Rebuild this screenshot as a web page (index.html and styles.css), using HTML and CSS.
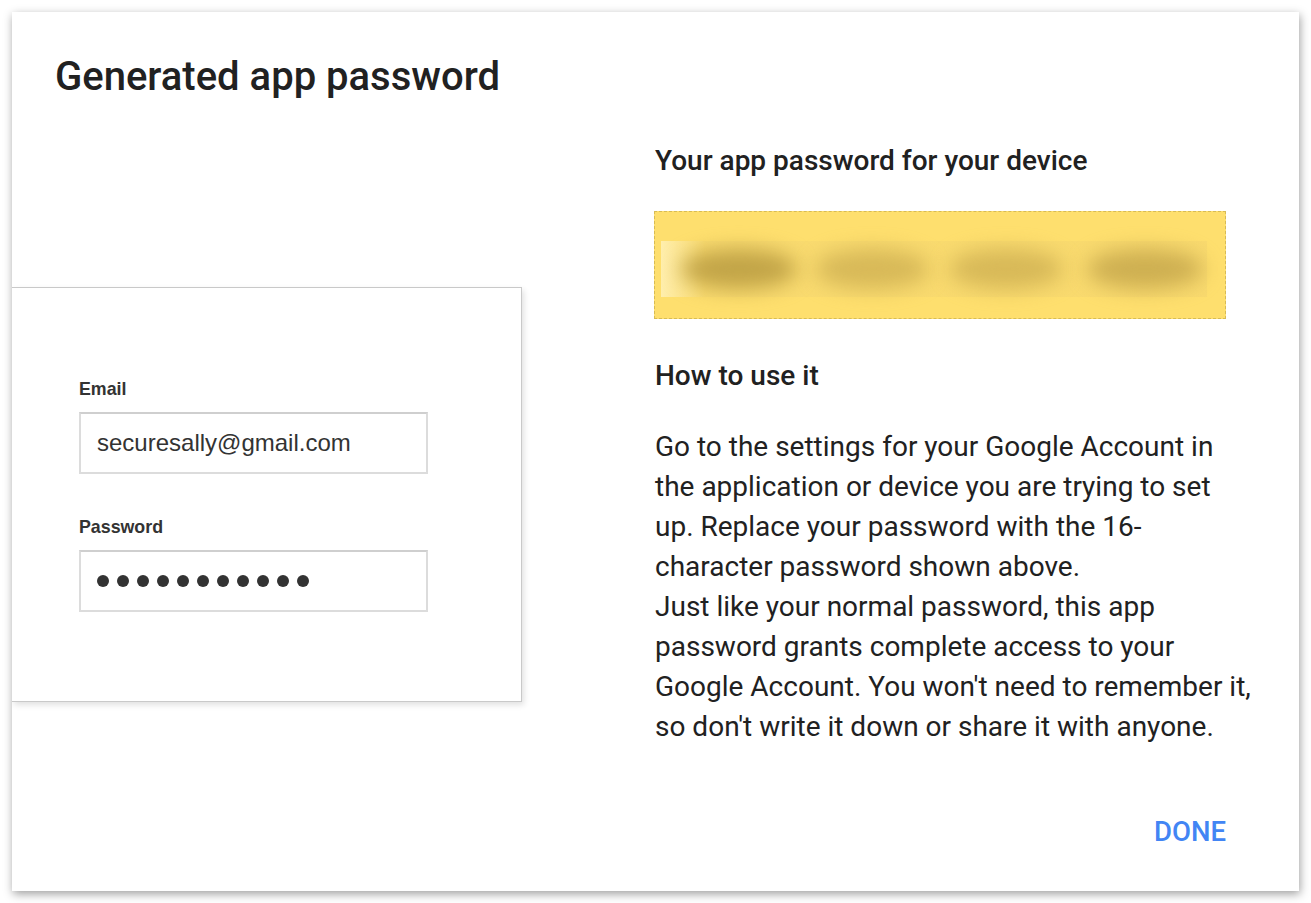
FILE: index.html
```html
<!DOCTYPE html>
<html lang="en">
<head>
<meta charset="utf-8">
<title>Generated app password</title>
<link rel="stylesheet" href="styles.css">
</head>
<body>
<div class="dialog">
  <h1 class="title">Generated app password</h1>
  <div class="body">
    <div class="left">
      <div class="card">
        <div class="field-label">Email</div>
        <div class="field-input">securesally@gmail.com</div>
        <div class="field-label second">Password</div>
        <div class="field-input dots">
          <span class="dot"></span><span class="dot"></span><span class="dot"></span><span class="dot"></span><span class="dot"></span><span class="dot"></span><span class="dot"></span><span class="dot"></span><span class="dot"></span><span class="dot"></span><span class="dot"></span>
        </div>
      </div>
    </div>
    <div class="right">
      <h2 class="heading">Your app password for your device</h2>
      <div class="pw-box">
        <div class="pw-strip">
          <span class="blob b1"></span><span class="blob b2"></span><span class="blob b3"></span><span class="blob b4"></span>
        </div>
      </div>
      <h2 class="heading how">How to use it</h2>
      <p class="para">
        <span class="line">Go to the settings for your Google Account in</span>
        <span class="line">the application or device you are trying to set</span>
        <span class="line">up. Replace your password with the 16-</span>
        <span class="line">character password shown above.</span>
        <span class="line">Just like your normal password, this app</span>
        <span class="line">password grants complete access to your</span>
        <span class="line">Google Account. You won't need to remember it,</span>
        <span class="line">so don't write it down or share it with anyone.</span>
      </p>
    </div>
  </div>
  <div class="footer">
    <button class="done">DONE</button>
  </div>
</div>
</body>
</html>
```
FILE: styles.css
```css
html, body {
  margin: 0;
  padding: 0;
  background: #ffffff;
}
body {
  padding: 12px;
  font-family: Roboto, "Noto Sans", Arial, sans-serif;
  color: #212121;
}
.dialog {
  box-sizing: border-box;
  width: 1287px;
  height: 879px;
  background: #ffffff;
  box-shadow: 1px 3px 9px rgba(0, 0, 0, 0.38);
  display: flex;
  flex-direction: column;
  overflow: hidden;
}
.title {
  margin: 0;
  padding: 41px 0 0 43px;
  font-size: 40px;
  line-height: 48px;
  font-weight: 500;
  color: #212121;
}
.body {
  display: flex;
}
.left {
  width: 510px;
  flex: none;
}
.card {
  box-sizing: border-box;
  margin-top: 186px;
  width: 510px;
  height: 415px;
  background: #fff;
  border: 1px solid #c9c9c9;
  border-left: none;
  box-shadow: 2px 3px 6px rgba(0, 0, 0, 0.12);
  padding: 91px 0 0 67px;
  font-family: "Liberation Sans", Arial, sans-serif;
}
.field-label {
  font-size: 17.8px;
  line-height: 20px;
  font-weight: bold;
  color: #333;
}
.field-label.second {
  margin-top: 43px;
}
.field-input {
  box-sizing: border-box;
  margin-top: 13px;
  width: 349px;
  height: 62px;
  border: 2px solid #dcdcdc;
  border-top-color: #cfcfcf;
  padding-left: 16px;
  display: flex;
  align-items: center;
  font-size: 24px;
  color: #333;
}
.dots {
  gap: 8px;
  padding-bottom: 1px;
}
.dot {
  width: 12px;
  height: 12px;
  border-radius: 50%;
  background: #333;
}
.right {
  margin-left: 132px;
  width: 620px;
}
.heading {
  margin: 44px 0 0 1px;
  font-size: 28px;
  line-height: 32px;
  font-weight: 500;
  color: #212121;
}
.heading.how {
  margin-top: 41px;
}
.pw-box {
  box-sizing: border-box;
  margin-top: 34px;
  width: 572px;
  height: 108px;
  background: #fedf6e;
  border: 1px dashed #d7bb55;
  padding: 29px 18px 0 6px;
}
.pw-strip {
  position: relative;
  height: 56px;
  background: linear-gradient(90deg, rgba(255, 240, 180, 0.9) 0%, rgba(247, 217, 112, 0.7) 8%, rgba(245, 214, 110, 0.6) 100%);
}
.blob {
  position: absolute;
  top: 8px;
  height: 40px;
  border-radius: 50%;
  filter: blur(10px);
}
.b1 { left: 20px; width: 116px; background: rgba(185, 155, 65, 0.85); }
.b2 { left: 154px; width: 114px; background: rgba(195, 165, 75, 0.62); }
.b3 { left: 288px; width: 114px; background: rgba(195, 165, 75, 0.62); }
.b4 { left: 426px; width: 116px; background: rgba(190, 160, 70, 0.72); }
.para {
  margin: 35px 0 0 1px;
  font-size: 28px;
  line-height: 40px;
  color: #212121;
}
.line {
  display: block;
  white-space: nowrap;
}
.footer {
  display: flex;
  justify-content: flex-end;
  padding-right: 73px;
  margin-top: 69px;
}
.done {
  border: none;
  background: none;
  padding: 0;
  font-family: Roboto, Arial, sans-serif;
  font-size: 27.5px;
  line-height: 32px;
  font-weight: 500;
  color: #4285f4;
  cursor: pointer;
}
```
